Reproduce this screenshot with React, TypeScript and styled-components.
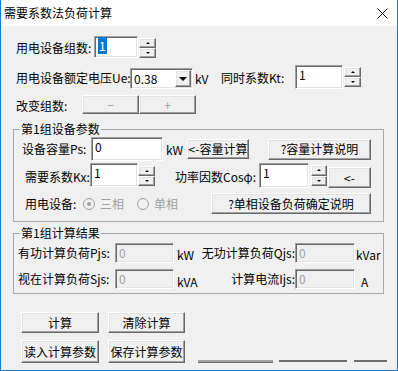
import React from "react";
import styled, { createGlobalStyle } from "styled-components";

const GlobalStyle = createGlobalStyle`
  html, body {
    margin: 0;
    padding: 0;
    background: #ffffff;
  }
  body {
    font-family: "Noto Sans CJK SC", "Liberation Sans", sans-serif;
    font-size: 12px;
    color: #000;
  }
`;

const Window = styled.div`
  width: 398px;
  height: 371px;
  box-sizing: border-box;
  border: 1px solid #1a7bd1;
  border-top: none;
  background: #f0f0f0;
  display: flex;
  flex-direction: column;
  overflow: hidden;
`;

const TitleBar = styled.div`
  height: 26px;
  flex: none;
  background: #ffffff;
  display: flex;
  align-items: center;
  justify-content: space-between;
  padding: 0 9px 0 3px;
  line-height: 14px;
`;

const Client = styled.div`
  flex: 1;
  display: flex;
  flex-direction: column;
  padding: 10px 13px 0 12px;
`;

const Row = styled.div<{ $h: number; $mt?: number; $pl?: number }>`
  display: flex;
  align-items: center;
  height: ${(p) => p.$h}px;
  margin-top: ${(p) => p.$mt ?? 0}px;
  padding-left: ${(p) => p.$pl ?? 0}px;
  flex: none;
`;

const Label = styled.span<{ $w: number; $right?: boolean; $ml?: number; $dy?: number }>`
  flex: none;
  width: ${(p) => p.$w}px;
  margin-left: ${(p) => p.$ml ?? 0}px;
  text-align: ${(p) => (p.$right ? "right" : "left")};
  white-space: nowrap;
  line-height: 14px;
  position: relative;
  top: ${(p) => p.$dy ?? 0}px;
`;

const TextBox = styled.div<{ $w: number; $h: number; $ml?: number; $disabled?: boolean; $self?: string }>`
  flex: none;
  box-sizing: border-box;
  width: ${(p) => p.$w}px;
  height: ${(p) => p.$h}px;
  margin-left: ${(p) => p.$ml ?? 0}px;
  align-self: ${(p) => p.$self ?? "auto"};
  background: ${(p) => (p.$disabled ? "#f0f0f0" : "#ffffff")};
  color: ${(p) => (p.$disabled ? "#a0a0a0" : "#000")};
  border: 1px solid;
  border-color: #a0a0a0 #ffffff #ffffff #a0a0a0;
  box-shadow: inset 1px 1px 0 #696969, inset -1px -1px 0 #e3e3e3;
  padding: 2px 0 0 3px;
  line-height: 14px;
  white-space: nowrap;
`;

const Selected = styled.span`
  background: #0078d7;
  color: #ffffff;
  padding: 0 1px;
`;

const raised = `
  box-sizing: border-box;
  background: #f0f0f0;
  border: 1px solid;
  border-color: #ffffff #696969 #696969 #ffffff;
  box-shadow: inset -1px -1px 0 #a0a0a0, inset 1px 1px 0 #e3e3e3;
`;

const Button = styled.div<{ $w: number; $h: number; $ml?: number; $disabled?: boolean; $self?: string }>`
  ${raised}
  flex: none;
  width: ${(p) => p.$w}px;
  height: ${(p) => p.$h}px;
  margin-left: ${(p) => p.$ml ?? 0}px;
  align-self: ${(p) => p.$self ?? "auto"};
  display: flex;
  align-items: center;
  justify-content: center;
  line-height: 14px;
  white-space: nowrap;
  color: ${(p) => (p.$disabled ? "#a0a0a0" : "#000")};
`;

const Spin = styled.div<{ $w: number; $h: number; $ml?: number; $self?: string }>`
  flex: none;
  display: flex;
  flex-direction: column;
  width: ${(p) => p.$w}px;
  height: ${(p) => p.$h}px;
  margin-left: ${(p) => p.$ml ?? 0}px;
  align-self: ${(p) => p.$self ?? "auto"};
`;

const SpinButton = styled.div`
  ${raised}
  flex: 1;
  display: flex;
  align-items: center;
  justify-content: center;
`;

const Arrow = styled.span<{ $down?: boolean; $size?: number }>`
  width: 0;
  height: 0;
  border-left: ${(p) => p.$size ?? 2}px solid transparent;
  border-right: ${(p) => p.$size ?? 2}px solid transparent;
  ${(p) =>
    p.$down
      ? `border-top: ${p.$size ?? 2}px solid #000;`
      : `border-bottom: ${p.$size ?? 2}px solid #000;`}
`;

const Select = styled.div<{ $w: number; $h: number; $ml?: number; $self?: string }>`
  flex: none;
  box-sizing: border-box;
  width: ${(p) => p.$w}px;
  height: ${(p) => p.$h}px;
  margin-left: ${(p) => p.$ml ?? 0}px;
  align-self: ${(p) => p.$self ?? "auto"};
  background: #ffffff;
  border: 1px solid;
  border-color: #a0a0a0 #ffffff #ffffff #a0a0a0;
  box-shadow: inset 1px 1px 0 #696969, inset -1px -1px 0 #e3e3e3;
  display: flex;
  align-items: center;
  justify-content: space-between;
  padding: 0 1px 0 3px;
  line-height: 14px;
`;

const DropButton = styled.div`
  ${raised}
  width: 16px;
  height: 17px;
  display: flex;
  align-items: center;
  justify-content: center;
`;

const Group = styled.fieldset<{ $mt: number; $pb: number }>`
  margin: ${(p) => p.$mt}px 0 0;
  padding: 0 0 ${(p) => p.$pb}px;
  min-width: 0;
  border: 1px solid #a8a8a8;
  flex: none;
`;

const Legend = styled.legend`
  margin-left: 6px;
  padding: 0 1px;
  line-height: 14px;
  font-size: 12px;
`;

const GroupBody = styled.div<{ $pl: number }>`
  display: flex;
  flex-direction: column;
  padding-left: ${(p) => p.$pl}px;
`;

const RadioItem = styled.span<{ $ml?: number }>`
  flex: none;
  display: flex;
  align-items: center;
  margin-left: ${(p) => p.$ml ?? 0}px;
  color: #a0a0a0;
  line-height: 14px;
`;

const RadioCircle = styled.span`
  box-sizing: border-box;
  width: 12px;
  height: 12px;
  border-radius: 50%;
  border: 1px solid #a0a0a0;
  background: #f0f0f0;
  display: flex;
  align-items: center;
  justify-content: center;
  margin-right: 5px;
`;

const RadioDot = styled.span`
  width: 4px;
  height: 4px;
  border-radius: 50%;
  background: #a0a0a0;
`;

const Bar = styled.span<{ $w: number; $ml: number; $light?: boolean }>`
  flex: none;
  align-self: flex-end;
  width: ${(p) => p.$w}px;
  height: 2px;
  margin-left: ${(p) => p.$ml}px;
  background: ${(p) => (p.$light ? "#a0a0a0" : "#6d6d6d")};
  border-bottom: ${(p) => (p.$light ? "1px solid #6d6d6d" : "none")};
  margin-bottom: ${(p) => (p.$light ? 0 : 1)}px;
`;

function Spinner(props: { w: number; h: number; ml?: number; self?: string }) {
  return (
    <Spin $w={props.w} $h={props.h} $ml={props.ml} $self={props.self}>
      <SpinButton>
        <Arrow />
      </SpinButton>
      <SpinButton>
        <Arrow $down />
      </SpinButton>
    </Spin>
  );
}

export default function App() {
  return (
    <>
      <GlobalStyle />
      <Window>
        <TitleBar>
          <span>需要系数法负荷计算</span>
          <svg width="11" height="11" viewBox="0 0 11 11">
            <path d="M0.5 0.5 L10.5 10.5 M10.5 0.5 L0.5 10.5" stroke="#000" strokeWidth="1" />
          </svg>
        </TitleBar>
        <Client>
          <Row $h={23} $pl={3}>
            <Label $w={78}>用电设备组数:</Label>
            <TextBox $w={44} $h={22} $self="flex-start">
              <Selected>1</Selected>
            </TextBox>
            <Spinner w={17} h={20} ml={1} />
          </Row>
          <Row $h={24} $mt={6} $pl={3}>
            <Label $w={114} $dy={1}>用电设备额定电压Ue:</Label>
            <Select $w={63} $h={21} $self="flex-end">
              <span>0.38</span>
              <DropButton>
                <Arrow $down $size={4} />
              </DropButton>
            </Select>
            <Label $w={26} $ml={2} $dy={2}>kV</Label>
            <Label $w={74} $dy={1}>同时系数Kt:</Label>
            <TextBox $w={48} $h={24}>1</TextBox>
            <Spinner w={17} h={20} ml={1} />
          </Row>
          <Row $h={19} $mt={6} $pl={3}>
            <Label $w={66} $dy={1}>改变组数:</Label>
            <Button $w={57} $h={19} $disabled>−</Button>
            <Button $w={57} $h={19} $disabled>+</Button>
          </Row>

          <Group $mt={8} $pb={7}>
            <Legend>第1组设备参数</Legend>
            <GroupBody $pl={8}>
              <Row $h={24} $mt={1}>
                <Label $w={69}>设备容量Ps:</Label>
                <TextBox $w={72} $h={24}>0</TextBox>
                <Label $w={21} $ml={3} $dy={1}>kW</Label>
                <Button $w={62} $h={20}>{"<-容量计算"}</Button>
                <Button $w={103} $h={21} $ml={19}>?容量计算说明</Button>
              </Row>
              <Row $h={25} $mt={2} $pl={3}>
                <Label $w={65} $dy={1}>需要系数Kx:</Label>
                <TextBox $w={48} $h={24} $self="flex-start">1</TextBox>
                <Spinner w={17} h={20} />
                <Label $w={84} $ml={20} $dy={1}>功率因数Cosφ:</Label>
                <TextBox $w={50} $h={25}>1</TextBox>
                <Spinner w={16} h={21} ml={2} />
                <Button $w={43} $h={21} $ml={1} $self="flex-end">{"<-"}</Button>
              </Row>
              <Row $h={21} $mt={5} $pl={3}>
                <Label $w={58}>用电设备:</Label>
                <RadioItem>
                  <RadioCircle>
                    <RadioDot />
                  </RadioCircle>
                  三相
                </RadioItem>
                <RadioItem $ml={13}>
                  <RadioCircle />
                  单相
                </RadioItem>
                <Button $w={160} $h={21} $ml={33}>?单相设备负荷确定说明</Button>
              </Row>
            </GroupBody>
          </Group>

          <Group $mt={4} $pb={4}>
            <Legend>第1组计算结果</Legend>
            <GroupBody $pl={4}>
              <Row $h={20} $mt={3}>
                <Label $w={97}>有功计算负荷Pjs:</Label>
                <TextBox $w={59} $h={20} $disabled>0</TextBox>
                <Label $w={22} $ml={3} $dy={2}>kW</Label>
                <Label $w={96} $right>无功计算负荷Qjs:</Label>
                <TextBox $w={60} $h={20} $disabled>0</TextBox>
                <Label $w={27} $ml={1} $dy={2}>kVar</Label>
              </Row>
              <Row $h={20} $mt={6}>
                <Label $w={97}>视在计算负荷Sjs:</Label>
                <TextBox $w={59} $h={20} $disabled>0</TextBox>
                <Label $w={22} $ml={3} $dy={3}>kVA</Label>
                <Label $w={96} $right>计算电流Ijs:</Label>
                <TextBox $w={60} $h={20} $disabled>0</TextBox>
                <Label $w={12} $ml={6} $dy={3}>A</Label>
              </Row>
            </GroupBody>
          </Group>

          <Row $h={21} $mt={18} $pl={8}>
            <Button $w={78} $h={21}>计算</Button>
            <Button $w={77} $h={21} $ml={9}>清除计算</Button>
          </Row>
          <Row $h={23} $mt={7} $pl={8}>
            <Button $w={78} $h={23}>读入计算参数</Button>
            <Button $w={77} $h={23} $ml={9}>保存计算参数</Button>
            <Bar $w={75} $ml={13} $light />
            <Bar $w={68} $ml={6} />
            <Bar $w={33} $ml={7} />
          </Row>
        </Client>
      </Window>
    </>
  );
}
